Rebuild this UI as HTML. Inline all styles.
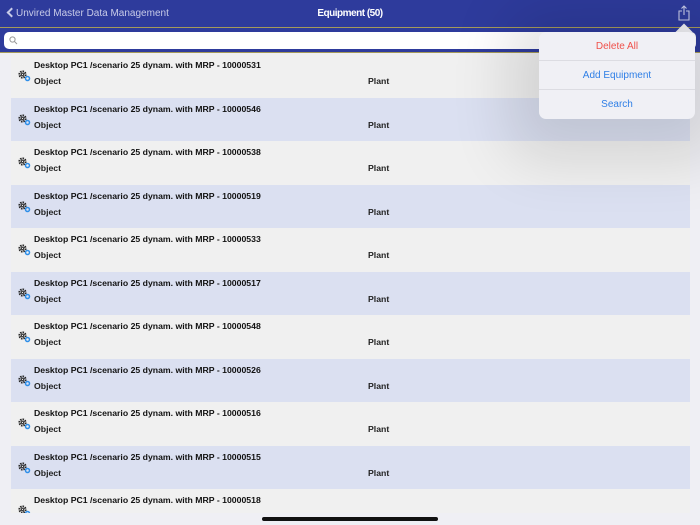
<!DOCTYPE html>
<html><head><style>
*{margin:0;padding:0;box-sizing:border-box}
body{width:700px;height:525px;overflow:hidden;background:#efeff4;font-family:"Liberation Sans",Arial,sans-serif;position:relative}
.nav{position:absolute;left:0;top:0;width:700px;height:27px;background:#2e3b9c;color:#fff}
.back{position:absolute;left:16px;top:8px;font-size:10px;color:#c8cbe8}
.chev{position:absolute;top:9px;width:7px;height:7px;border-left:2px solid #c8cbe8;border-bottom:2px solid #c8cbe8;transform:rotate(45deg);left:8px}
.title{position:absolute;left:0;width:700px;text-align:center;top:8px;font-size:10px;font-weight:bold;letter-spacing:-0.5px}
.sbar{position:absolute;top:27px;left:0;width:700px;height:26px;background:#2e3b9c;border-top:1px solid #a59a5a;border-bottom:1px solid #a59a5a}
.sin{position:absolute;left:4px;top:4px;width:692px;height:17px;background:#fff;border-radius:5px}
.list{position:absolute;left:11px;top:54px;width:679px;height:459px;overflow:hidden}
.row{height:43.56px;position:relative;font-size:8.7px;color:#111}
.row:nth-of-type(odd){background:#f0f0f0}.row:nth-of-type(even){background:#dbe0f1}
.t{position:absolute;left:23px;top:6px;font-weight:bold}
.o{position:absolute;left:23px;top:22px;font-weight:bold;color:#222}
.p{position:absolute;left:357px;top:22px;font-weight:bold;color:#222}
.ic{position:absolute;left:7px;top:16px}
.home{position:absolute;left:262px;top:517px;width:176px;height:4px;border-radius:2px;background:#111}
.pop{position:absolute;left:539px;top:32px;width:156px;height:87px;background:#f0f0f5;border-radius:7px;box-shadow:0 10px 60px 30px rgba(0,0,0,.12);font-size:10px;text-align:center}
.pop div{height:29px;line-height:29px;border-bottom:1px solid #dcdce2;color:#2f7fe6}
.pop div:last-child{border:none}
.arrow{position:absolute;left:678px;top:26px;width:12px;height:12px;background:#f0f0f5;transform:rotate(45deg)}
</style></head><body>
<div class="nav"><div class="chev"></div><div class="back">Unvired Master Data Management</div><div class="title">Equipment (50)</div>
<svg style="position:absolute;left:678px;top:5px" width="12" height="16" viewBox="0 0 12 16" fill="none" stroke="#c8cbe8" stroke-width="1.1"><path d="M4 6H1v9h10V6H8M6 1v9M3.5 3.5L6 1l2.5 2.5"/></svg></div>
<div class="sbar"><div class="sin"><svg style="position:absolute;left:5px;top:4px" width="9" height="9" viewBox="0 0 9 9" fill="none" stroke="#999" stroke-width="1"><circle cx="3.5" cy="3.5" r="2.6"/><path d="M5.5 5.5L8 8"/></svg></div></div>
<div class="list">
<script>
const ids=["10000531","10000546","10000538","10000519","10000533","10000517","10000548","10000526","10000516","10000515","10000518"];
for(const id of ids)document.write('<div class="row"><svg class="ic" width="13" height="12" viewBox="0 0 13 12"><circle cx="4.5" cy="4.5" r="3" fill="none" stroke="#222" stroke-width="2.2" stroke-dasharray="1.4 0.9"/><circle cx="4.5" cy="4.5" r="1.6" fill="#222"/><circle cx="4.5" cy="4.5" r="0.7" fill="#f0f0f0"/><circle cx="9.5" cy="8.5" r="2" fill="none" stroke="#2e8ee8" stroke-width="1.5"/></svg><div class="t">Desktop PC1 /scenario 25 dynam. with MRP - '+id+'</div><div class="o">Object</div><div class="p">Plant</div></div>');
</script>
</div>
<div class="arrow"></div>
<div class="pop"><div style="color:#f0504a">Delete All</div><div>Add Equipment</div><div>Search</div></div>
<div class="home"></div>
</body></html>
